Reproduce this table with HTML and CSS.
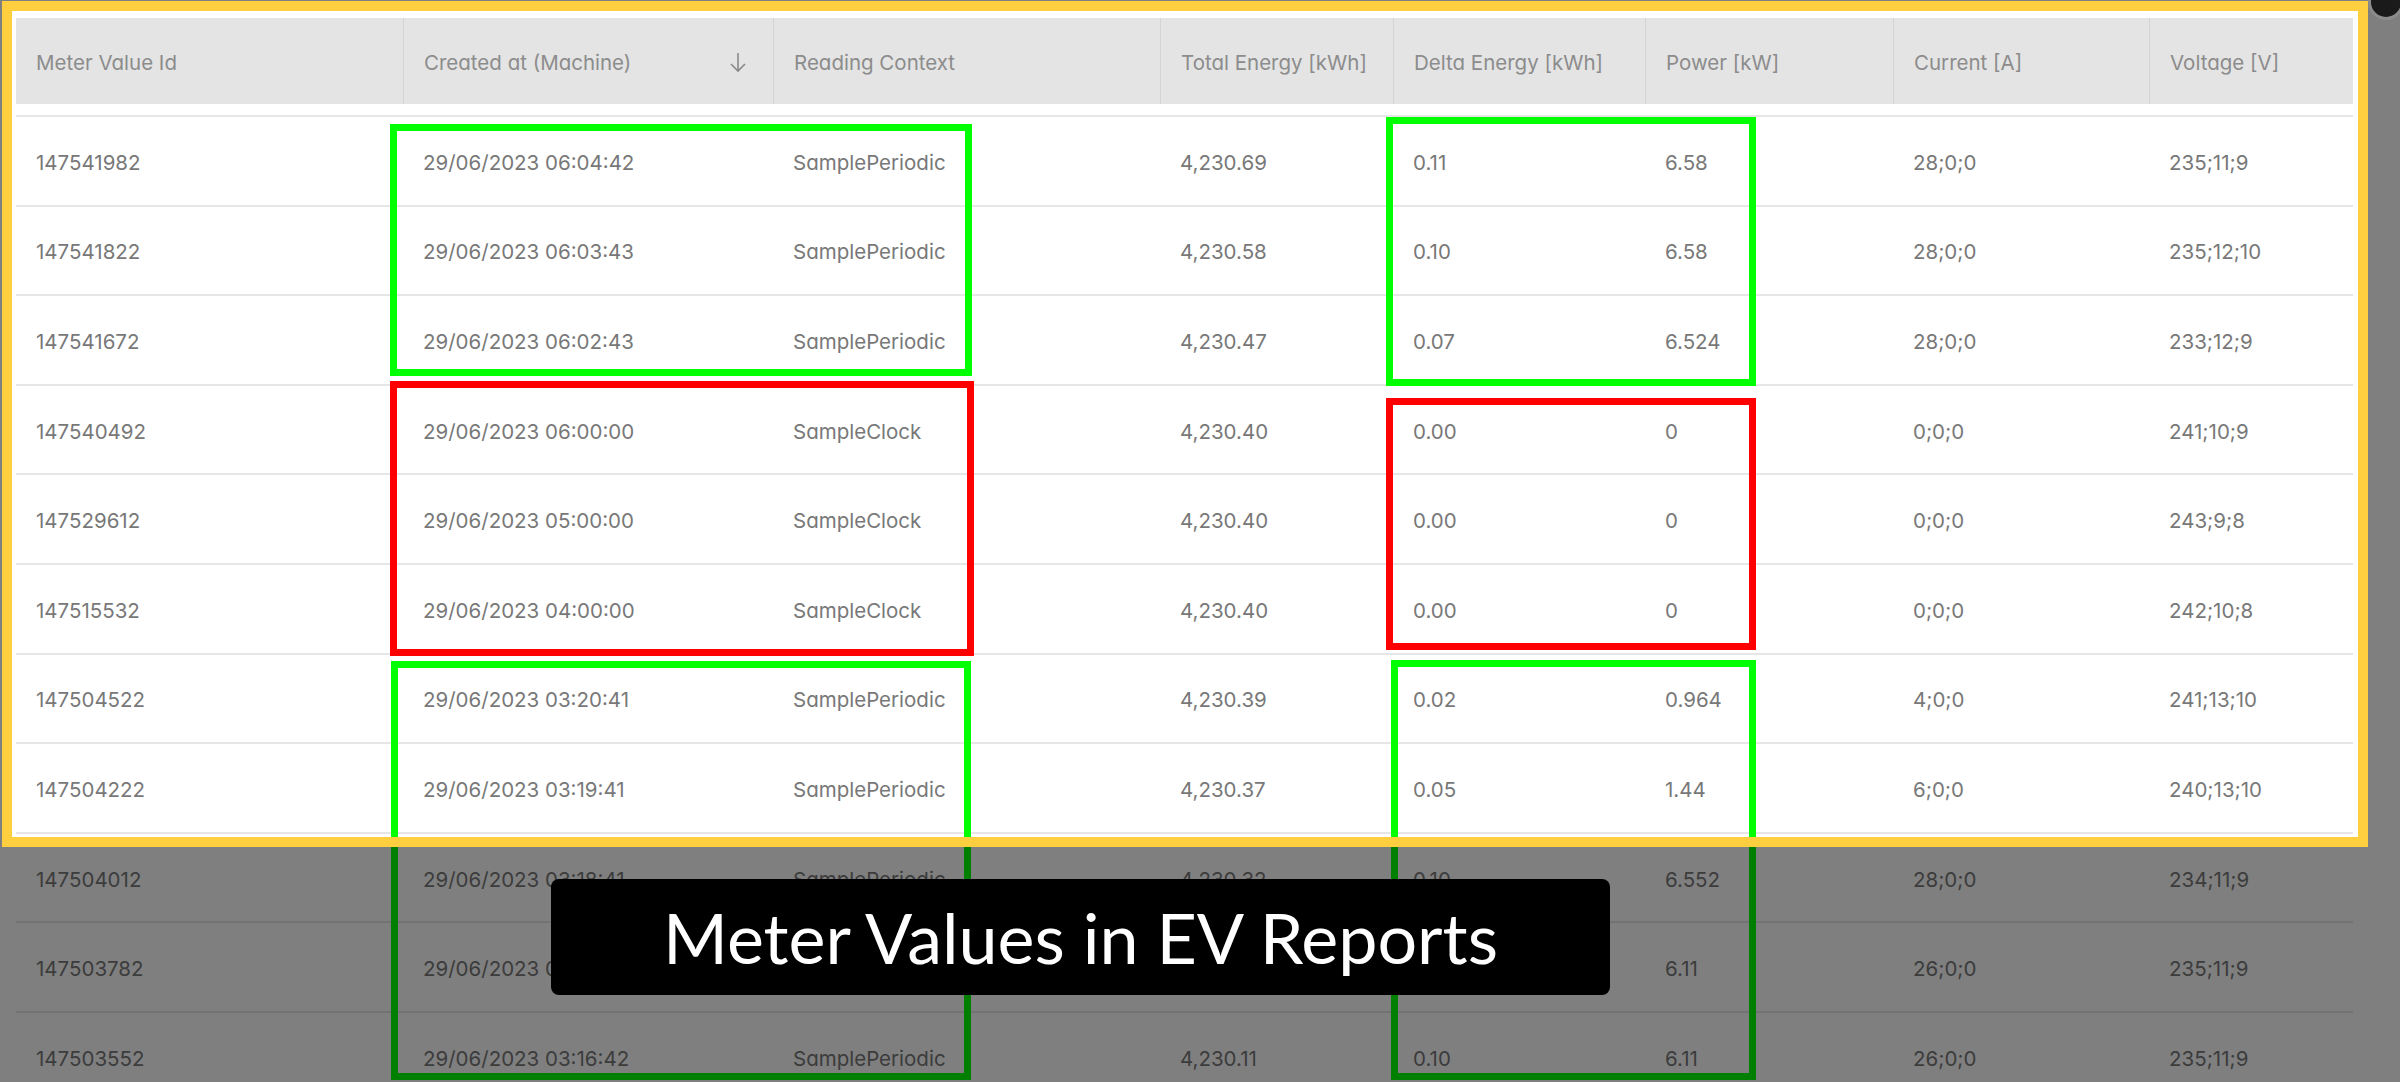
FILE: index.html
```html
<!DOCTYPE html>
<html>
<head>
<meta charset="utf-8">
<link rel="stylesheet" href="styles.css">
</head>
<body>
<div class="page">
  <div class="table">
    <div class="thead">
      <div class="th">Meter Value Id</div>
      <div class="th sortable">Created at (Machine)
        <svg class="sort-icon" width="18" height="22" viewBox="0 0 18 22"><path d="M9 2 V20 M2 13 L9 20 L16 13" fill="none" stroke="#8a8a8a" stroke-width="1.6"/></svg>
      </div>
      <div class="th">Reading Context</div>
      <div class="th">Total Energy [kWh]</div>
      <div class="th">Delta Energy [kWh]</div>
      <div class="th">Power [kW]</div>
      <div class="th">Current [A]</div>
      <div class="th">Voltage [V]</div>
    </div>
    <div class="tbody">
      <div class="tr"><div class="td">147541982</div><div class="td">29/06/2023 06:04:42</div><div class="td">SamplePeriodic</div><div class="td">4,230.69</div><div class="td">0.11</div><div class="td">6.58</div><div class="td">28;0;0</div><div class="td">235;11;9</div></div>
      <div class="tr"><div class="td">147541822</div><div class="td">29/06/2023 06:03:43</div><div class="td">SamplePeriodic</div><div class="td">4,230.58</div><div class="td">0.10</div><div class="td">6.58</div><div class="td">28;0;0</div><div class="td">235;12;10</div></div>
      <div class="tr"><div class="td">147541672</div><div class="td">29/06/2023 06:02:43</div><div class="td">SamplePeriodic</div><div class="td">4,230.47</div><div class="td">0.07</div><div class="td">6.524</div><div class="td">28;0;0</div><div class="td">233;12;9</div></div>
      <div class="tr"><div class="td">147540492</div><div class="td">29/06/2023 06:00:00</div><div class="td">SampleClock</div><div class="td">4,230.40</div><div class="td">0.00</div><div class="td">0</div><div class="td">0;0;0</div><div class="td">241;10;9</div></div>
      <div class="tr"><div class="td">147529612</div><div class="td">29/06/2023 05:00:00</div><div class="td">SampleClock</div><div class="td">4,230.40</div><div class="td">0.00</div><div class="td">0</div><div class="td">0;0;0</div><div class="td">243;9;8</div></div>
      <div class="tr"><div class="td">147515532</div><div class="td">29/06/2023 04:00:00</div><div class="td">SampleClock</div><div class="td">4,230.40</div><div class="td">0.00</div><div class="td">0</div><div class="td">0;0;0</div><div class="td">242;10;8</div></div>
      <div class="tr"><div class="td">147504522</div><div class="td">29/06/2023 03:20:41</div><div class="td">SamplePeriodic</div><div class="td">4,230.39</div><div class="td">0.02</div><div class="td">0.964</div><div class="td">4;0;0</div><div class="td">241;13;10</div></div>
      <div class="tr"><div class="td">147504222</div><div class="td">29/06/2023 03:19:41</div><div class="td">SamplePeriodic</div><div class="td">4,230.37</div><div class="td">0.05</div><div class="td">1.44</div><div class="td">6;0;0</div><div class="td">240;13;10</div></div>
      <div class="tr"><div class="td">147504012</div><div class="td">29/06/2023 03:18:41</div><div class="td">SamplePeriodic</div><div class="td">4,230.32</div><div class="td">0.10</div><div class="td">6.552</div><div class="td">28;0;0</div><div class="td">234;11;9</div></div>
      <div class="tr"><div class="td">147503782</div><div class="td">29/06/2023 0</div><div class="td"></div><div class="td"></div><div class="td"></div><div class="td">6.11</div><div class="td">26;0;0</div><div class="td">235;11;9</div></div>
      <div class="tr"><div class="td">147503552</div><div class="td">29/06/2023 03:16:42</div><div class="td">SamplePeriodic</div><div class="td">4,230.11</div><div class="td">0.10</div><div class="td">6.11</div><div class="td">26;0;0</div><div class="td">235;11;9</div></div>
    </div>
  </div>

  <div class="mark green mark-a"></div>
  <div class="mark green mark-b"></div>
  <div class="mark red mark-c"></div>
  <div class="mark red mark-d"></div>
  <div class="mark green mark-e"></div>
  <div class="mark green mark-f"></div>

  <div class="spotlight"></div>
  <div class="close-btn"></div>

  <div class="caption">Meter Values in EV Reports</div>
</div>
</body>
</html>
```

FILE: styles.css
```css
html, body {
  margin: 0;
  padding: 0;
}
body {
  background: #ffffff;
  width: 2400px;
  height: 1082px;
  overflow: hidden;
}
.page {
  position: relative;
  width: 2400px;
  height: 1082px;
  overflow: hidden;
  background: #ffffff;
}
.table {
  margin: 18px 0 0 16px;
  width: 2337px;
  font-family: "Inter", "Noto Sans", sans-serif;
  font-feature-settings: "cv11" 1;
  font-size: 20.5px;
  color: #787878;
}
.thead, .tr {
  display: grid;
  grid-template-columns: 387px 370px 387px 233px 252px 248px 256px 204px;
}
.thead {
  height: 86px;
  background: #e4e4e4;
  color: #8c8c8c;
}
.th {
  display: flex;
  align-items: center;
  padding-left: 20px;
  padding-top: 2px;
  border-left: 1px solid #d4d4d4;
}
.th:first-child {
  border-left: none;
}
.sortable {
  justify-content: space-between;
  padding-right: 26px;
}
.sort-icon {
  display: block;
}
.tbody {
  margin-top: 11px;
}
.tr {
  height: 89.6px;
  box-sizing: border-box;
  border-top: 2px solid #e6e6e6;
}
.td {
  display: flex;
  align-items: center;
  padding-left: 20px;
  padding-top: 3px;
  white-space: nowrap;
}

.mark {
  position: absolute;
  box-sizing: border-box;
  border: 7px solid;
}
.green { border-color: #00ff00; }
.red { border-color: #ff0000; }
.mark-a { left: 390px; top: 124px; width: 582px; height: 252px; }
.mark-b { left: 1386px; top: 117px; width: 370px; height: 269px; }
.mark-c { left: 390px; top: 381px; width: 584px; height: 275px; }
.mark-d { left: 1386px; top: 398px; width: 370px; height: 252px; }
.mark-e { left: 391px; top: 661px; width: 580px; height: 419px; }
.mark-f { left: 1391px; top: 660px; width: 365px; height: 420px; }

.spotlight {
  position: absolute;
  left: 2px;
  top: 1px;
  width: 2366px;
  height: 846px;
  box-sizing: border-box;
  border: 10px solid #ffcf40;
  box-shadow: 0 0 0 3000px rgba(0, 0, 0, 0.5);
}
.close-btn {
  position: absolute;
  left: 2368px;
  top: -16px;
  width: 30px;
  height: 30px;
  border-radius: 50%;
  background: #1a1a1a;
  border: 3px solid #8c8c8c;
}
.caption {
  position: absolute;
  left: 551px;
  top: 879px;
  width: 1059px;
  height: 116px;
  background: #000000;
  border-radius: 8px;
  display: flex;
  align-items: center;
  justify-content: center;
  color: #ffffff;
  font-family: "Lato", "Noto Sans", sans-serif;
  font-size: 70px;
}
```
